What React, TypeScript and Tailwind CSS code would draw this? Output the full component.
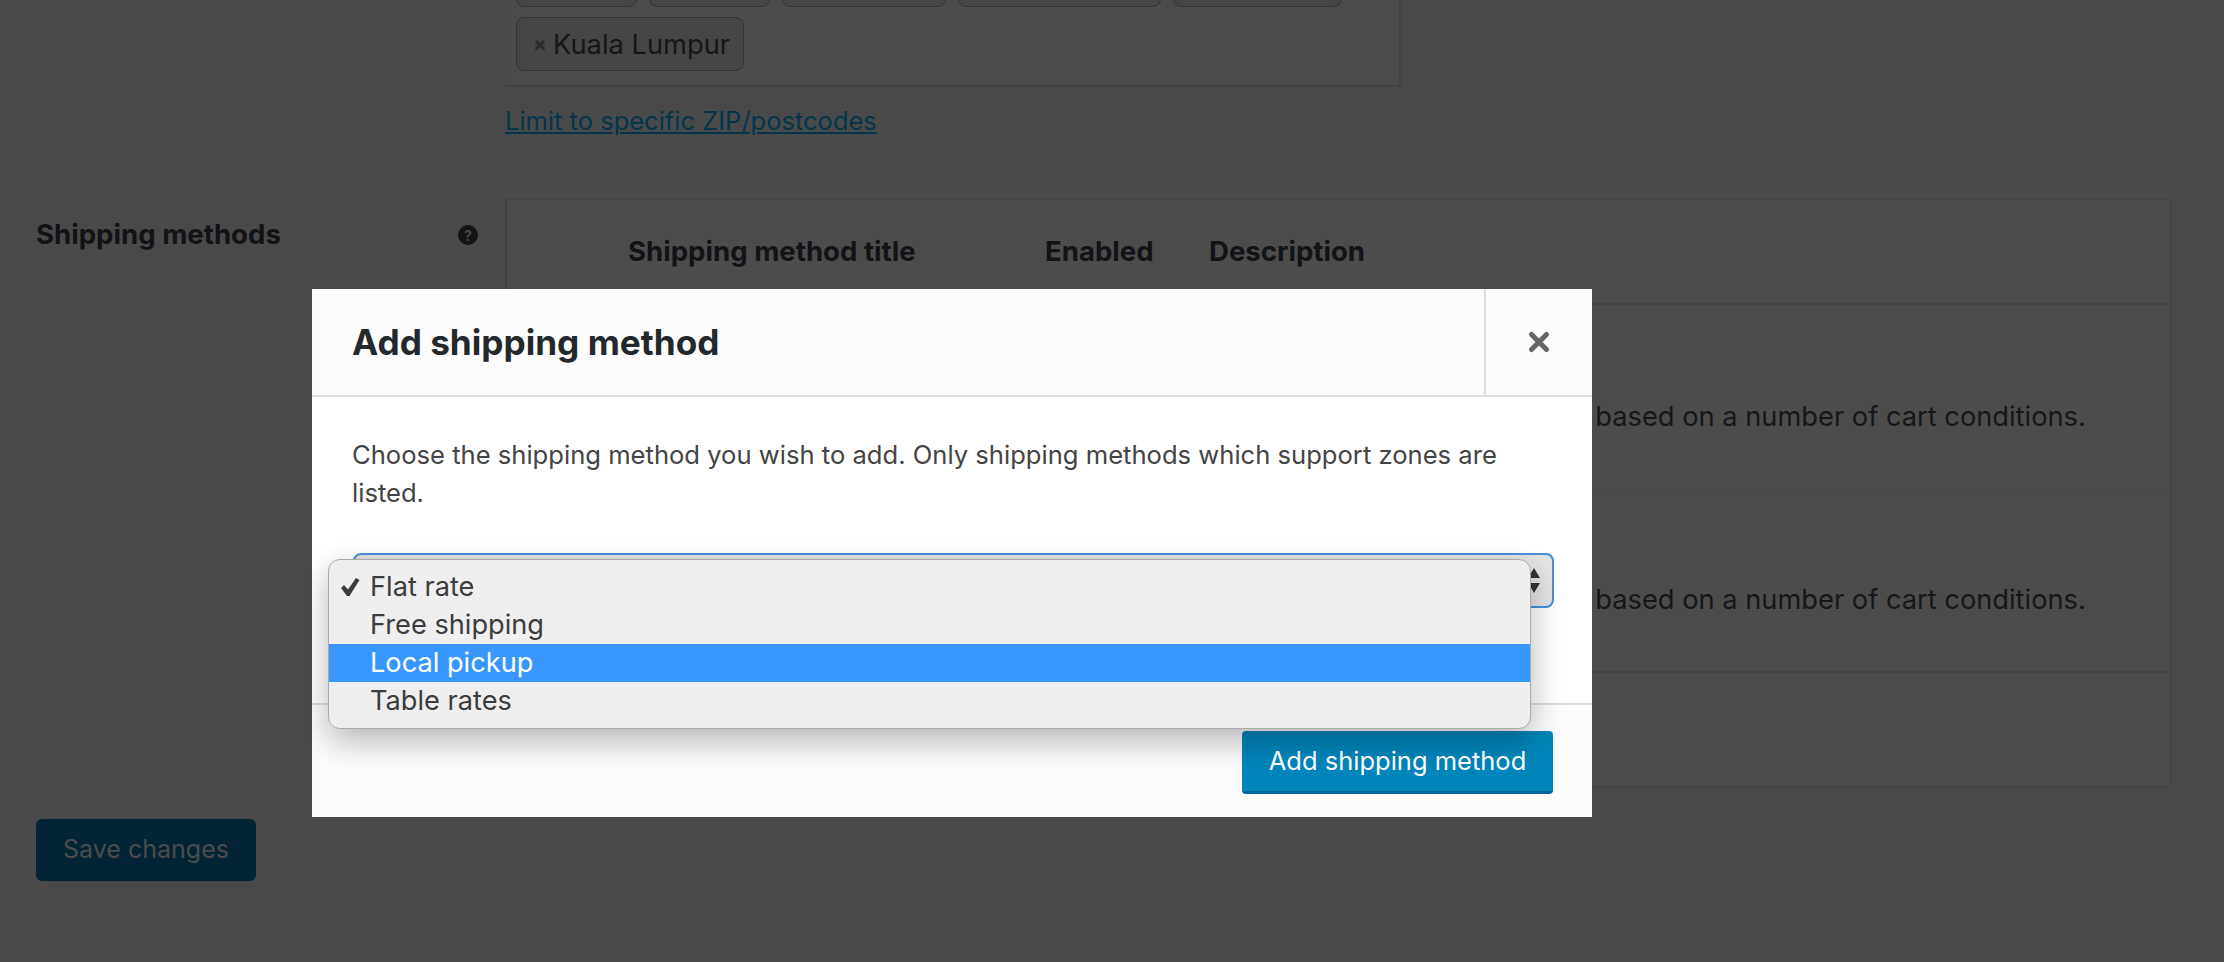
import { X } from "lucide-react";

const cutOffTags = ["w-[121px]", "w-[121px]", "w-[164px]", "w-[203px]", "w-[169px]"];

const methods = ["Flat rate", "Free shipping", "Local pickup", "Table rates"];

const RateRow = ({ className }: { className: string }) => (
	<div className={`flex items-center border-b-2 ${className}`}>
		<p className="whitespace-nowrap pl-[685px] text-[27.25px] leading-[36px] text-[#141618]">
			Lets you charge dynamic rates based on a number of cart conditions.
		</p>
	</div>
);

const AddShippingModal = () => (
	<div className="absolute left-[312px] top-[289px] flex h-[528px] w-[1280px] flex-col bg-white">
		<header className="flex h-[108px] shrink-0 border-b-2 border-[#ddd] bg-[#fcfcfc]">
			<h1 className="flex flex-1 items-center pl-[40px] text-[35.2px] font-bold text-[#23282d]">
				Add shipping method
			</h1>
			<button className="flex w-[108px] items-center justify-center border-l-2 border-[#ddd] text-[#666]">
				<X className="h-[30px] w-[30px]" strokeWidth={4} />
			</button>
		</header>

		<div className="flex-1 px-[40px] pt-[39px]">
			<p className="text-[25.6px] leading-[38px] text-[#444]">
				Choose the shipping method you wish to add. Only shipping methods which support zones are listed.
			</p>
			<div className="relative -mr-[2px] ml-[1px] mt-[41px] flex h-[55px] items-center justify-end rounded-lg border-2 border-[#4a90d9] bg-[#e4e4e4] pr-[12px]">
				<svg width="12" height="25" viewBox="0 0 12 25" className="fill-[#333]">
					<path d="M6 0 L12 10 L0 10 Z" />
					<path d="M0 15 L12 15 L6 25 Z" />
				</svg>
				{/* open select menu */}
				<ul className="absolute -left-[27px] top-[4px] w-[1203px] rounded-xl border border-[#aaa] bg-[#efefef] py-[8px] text-[27.2px] leading-[37px] text-[#3c3c3c] shadow-[0_12px_32px_rgba(0,0,0,0.28)]">
					{methods.map((method, index) => (
						<li
							key={method}
							className={`relative h-[38px] pl-[41px] ${index === 2 ? "bg-[#3797ff] text-white" : ""}`}
						>
							{index === 0 && (
								<svg width="20" height="20" viewBox="0 0 20 20" className="absolute left-[11px] top-[9px] fill-[#3c3c3c]">
									<path d="M1 11 L4 8 L8 12.5 L16 1 L19.5 3 L9.5 19 L7 19 Z" />
								</svg>
							)}
							{method}
						</li>
					))}
				</ul>
			</div>
		</div>

		<footer className="flex h-[114px] shrink-0 justify-end border-t-2 border-[#ddd] bg-[#fcfcfc] pr-[39px] pt-[26px]">
			<button className="h-[63px] w-[311px] rounded border-b-[3px] border-[#006799] bg-[#0085ba] text-[25.5px] text-white">
				Add shipping method
			</button>
		</footer>
	</div>
);

export default function App() {
	return (
		<div className="relative h-[962px] w-[2224px] overflow-hidden bg-[#494949] font-['Inter',sans-serif]">
			{/* page behind the dialog, already dimmed by the backdrop */}
			<main className="px-[36px]">
				<div className="flex">
					<div className="w-[469px] shrink-0" />
					<div>
						<div className="flex h-[87px] w-[896px] flex-col justify-end gap-[10px] overflow-hidden border-b-2 border-r-2 border-[#444] bg-[#4c4c4c] pb-[14px] pl-[11px]">
							<div className="flex shrink-0 gap-[12px]">
								{cutOffTags.map((width, index) => (
									<div key={index} className={`h-[54px] shrink-0 rounded-lg border border-[#333] bg-[#454545] ${width}`} />
								))}
							</div>
							<div className="flex h-[54px] w-[228px] shrink-0 items-center gap-[6px] rounded-lg border border-[#333] bg-[#454545] pl-[16px] pt-[2px] text-[27.3px] text-[#141618]">
								<X className="h-[14px] w-[14px] shrink-0 text-[#2b2b2b]" strokeWidth={5} />
								<span className="whitespace-nowrap">Kuala Lumpur</span>
							</div>
						</div>
						<a className="mt-[19px] block text-[25.5px] leading-[30px] text-[#03344a] underline">
							Limit to specific ZIP/postcodes
						</a>
					</div>
				</div>

				<div className="mt-[62px] flex">
					<div className="flex h-[74px] w-[469px] shrink-0 items-center justify-between pr-[27px]">
						<span className="text-[27.6px] font-bold text-[#111316]">Shipping methods</span>
						<span className="flex h-[20px] w-[20px] items-center justify-center rounded-full bg-[#141414] text-[14px] font-bold text-[#4c4c4c]">
							?
						</span>
					</div>
					<div className="w-[1667px] border-2 border-[#444] bg-[#4c4c4c]">
						<div className="flex h-[105px] items-center border-b-2 border-[#444] pl-[121px] text-[27.6px] font-bold text-[#111316]">
							<span className="w-[417px]">Shipping method title</span>
							<span className="w-[164px]">Enabled</span>
							<span>Description</span>
						</div>
						<RateRow className="h-[185px] border-[#4a4a4a] pt-[40px]" />
						<RateRow className="h-[183px] border-[#444] pt-[38px]" />
						<div className="h-[113px]" />
					</div>
				</div>

				<button className="mt-[31px] h-[62px] w-[220px] rounded-md bg-[#032434] text-[25px] text-[#4c4c4c]">
					Save changes
				</button>
			</main>

			<AddShippingModal />
		</div>
	);
}
